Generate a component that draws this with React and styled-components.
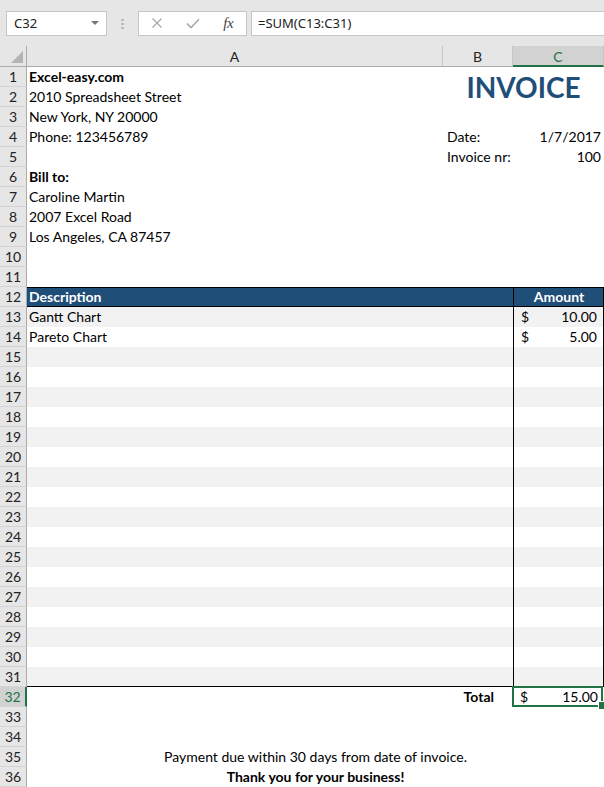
import React from "react";
import styled, { createGlobalStyle, css } from "styled-components";

const GREEN = "#217346";
const NAVY = "#1f4e78";
const CELL_FONT = `Lato, "Open Sans", "Liberation Sans", sans-serif`;
const UI_FONT = `"Noto Sans", "Open Sans", "DejaVu Sans", sans-serif`;

const GlobalStyle = createGlobalStyle`
  html, body {
    margin: 0;
    padding: 0;
    background: #fff;
  }
  body {
    width: 604px;
    height: 787px;
    overflow: hidden;
  }
  * {
    box-sizing: border-box;
  }
`;

/* ---------- formula bar ---------- */

const FormulaBar = styled.div`
  height: 46px;
  display: flex;
  align-items: center;
  padding-left: 6px;
  background: #e6e6e6;
  font-family: ${UI_FONT};
  font-size: 13px;
  color: #222;
`;

const NameBox = styled.div`
  width: 101px;
  height: 25px;
  flex: none;
  display: flex;
  align-items: center;
  justify-content: space-between;
  padding: 0 7px 0 7px;
  background: #fff;
  border: 1px solid #c6c6c6;
`;

const Caret = styled.span`
  width: 0;
  height: 0;
  border-left: 4px solid transparent;
  border-right: 4px solid transparent;
  border-top: 4px solid #777;
`;

const Grip = styled.div`
  width: 3px;
  height: 11px;
  flex: none;
  margin: 0 14px;
  background: radial-gradient(circle, #b0b0b0 1px, transparent 1.3px) 0 0 / 3px 4px repeat-y;
`;

const ButtonBox = styled.div`
  width: 109px;
  height: 25px;
  flex: none;
  display: flex;
  background: #fff;
  border: 1px solid #c6c6c6;
`;

const BarButton = styled.span`
  width: 36px;
  display: flex;
  align-items: center;
  justify-content: center;
  color: #a8a8a8;
`;

const Fx = styled.span`
  font-family: "Liberation Serif", "DejaVu Serif", serif;
  font-style: italic;
  font-size: 15px;
  color: #444;
  letter-spacing: -0.5px;
`;

const FormulaInput = styled.div`
  flex: none;
  width: 360px;
  height: 25px;
  margin-left: 4px;
  display: flex;
  align-items: center;
  padding-left: 6px;
  background: #fff;
  border: 1px solid #c6c6c6;
`;

/* ---------- sheet grid ---------- */

const Sheet = styled.div`
  display: grid;
  grid-template-columns: 27px 416px 70px 91px;
  grid-template-rows: 21px repeat(36, 20px);
  font-family: ${CELL_FONT};
  font-size: 14px;
  color: #000;
`;

const Corner = styled.div`
  grid-row: 1;
  grid-column: 1;
  display: flex;
  align-items: flex-end;
  justify-content: flex-end;
  padding: 0 3px 3px 0;
  background: #e6e6e6;
  border-right: 1px solid #ababab;
  border-bottom: 1px solid #ababab;
`;

const CornerMark = styled.span`
  width: 0;
  height: 0;
  border-left: 12px solid transparent;
  border-bottom: 12px solid #b4b4b4;
`;

const ColHead = styled.div`
  grid-row: 1;
  display: flex;
  align-items: center;
  justify-content: center;
  background: ${(p) => (p.$active ? "#d2d2d2" : "#e6e6e6")};
  color: ${(p) => (p.$active ? GREEN : "#222")};
  border-right: 1px solid #c6c6c6;
  border-bottom: ${(p) => (p.$active ? `2px solid ${GREEN}` : "1px solid #ababab")};
  padding-top: 1px;
`;

const RowHead = styled.div`
  grid-row: ${(p) => p.$r + 1};
  grid-column: 1;
  display: flex;
  align-items: center;
  justify-content: center;
  background: ${(p) => (p.$active ? "#d2d2d2" : "#e6e6e6")};
  color: ${(p) => (p.$active ? GREEN : "#222")};
  border-right: ${(p) => (p.$active ? `2px solid ${GREEN}` : "1px solid #ababab")};
  border-bottom: 1px solid #d4d4d4;
`;

const Cell = styled.div`
  grid-row: ${(p) => p.$r + 1} / span ${(p) => p.$rows || 1};
  grid-column: ${(p) => p.$c} / span ${(p) => p.$span || 1};
  display: flex;
  align-items: center;
  padding: 0 3px;
  line-height: 20px;
  white-space: nowrap;
  font-weight: ${(p) => (p.$bold ? 700 : 400)};
`;

const InfoCell = styled(Cell)`
  padding-left: 2px;
`;

const InvoiceTitle = styled(Cell)`
  justify-content: center;
  font-size: 28px;
  font-weight: 700;
  color: ${NAVY};
`;

const LabelCell = styled(Cell)`
  padding-left: 4px;
`;

const ValueCell = styled(Cell)`
  justify-content: flex-end;
  padding-right: 3px;
`;

const tableEdge = css`
  border-bottom: ${(p) => (p.$last ? "1px solid #000" : "none")};
`;

const HeadDesc = styled(Cell)`
  background: ${NAVY};
  color: #fff;
  font-weight: 700;
  padding-left: 2px;
  border-top: 1px solid #000;
  border-bottom: 1px solid #000;
`;

const HeadAmount = styled(Cell)`
  justify-content: center;
  background: ${NAVY};
  color: #fff;
  font-weight: 700;
  border: 1px solid #000;
  padding-left: 4px;
`;

const DescCell = styled(Cell)`
  background: ${(p) => (p.$shade ? "#f2f2f2" : "#fff")};
  padding-left: 2px;
  ${tableEdge}
`;

const AmountCell = styled(Cell)`
  justify-content: space-between;
  padding: 0 6px 0 7px;
  background: ${(p) => (p.$shade ? "#f2f2f2" : "#fff")};
  border-left: 1px solid #000;
  border-right: 1px solid #000;
  ${tableEdge}
`;

const TotalLabel = styled(Cell)`
  justify-content: flex-end;
  padding-right: 19px;
  font-weight: 700;
`;

const TotalAmount = styled(Cell)`
  position: relative;
  justify-content: space-between;
  padding: 0 6px 0 7px;

  &::before {
    content: "";
    position: absolute;
    top: -1px;
    left: -1px;
    right: 1px;
    bottom: 0;
    border: 2px solid ${GREEN};
  }

  &::after {
    content: "";
    position: absolute;
    right: -3px;
    bottom: -3px;
    width: 7px;
    height: 7px;
    background: ${GREEN};
    border: 1px solid #fff;
  }
`;

const NoteCell = styled(Cell)`
  justify-content: center;
`;

const CrossIcon = () => (
  <svg width="12" height="12" viewBox="0 0 12 12" fill="none" stroke="currentColor" strokeWidth="1.3">
    <path d="M1.5 1.5 L10.5 10.5 M10.5 1.5 L1.5 10.5" />
  </svg>
);

const CheckIcon = () => (
  <svg width="14" height="11" viewBox="0 0 14 11" fill="none" stroke="currentColor" strokeWidth="1.6">
    <path d="M1 5.5 L5 9.5 L13 1.2" />
  </svg>
);

const items = [
  { d: "Gantt Chart", v: "10.00" },
  { d: "Pareto Chart", v: "5.00" },
];

export default function App() {
  const rowNums = Array.from({ length: 36 }, (_, i) => i + 1);
  const tableRows = Array.from({ length: 19 }, (_, i) => i + 13);

  return (
    <>
      <GlobalStyle />
      <FormulaBar>
        <NameBox>
          C32
          <Caret />
        </NameBox>
        <Grip />
        <ButtonBox>
          <BarButton>
            <CrossIcon />
          </BarButton>
          <BarButton>
            <CheckIcon />
          </BarButton>
          <BarButton>
            <Fx>fx</Fx>
          </BarButton>
        </ButtonBox>
        <FormulaInput>=SUM(C13:C31)</FormulaInput>
      </FormulaBar>

      <Sheet>
        <Corner>
          <CornerMark />
        </Corner>
        <ColHead>A</ColHead>
        <ColHead>B</ColHead>
        <ColHead $active>C</ColHead>

        {rowNums.map((n) => (
          <RowHead key={n} $r={n} $active={n === 32}>
            {n}
          </RowHead>
        ))}

        <InfoCell $r={1} $c={2} $bold>Excel-easy.com</InfoCell>
        <InfoCell $r={2} $c={2}>2010 Spreadsheet Street</InfoCell>
        <InfoCell $r={3} $c={2}>New York, NY 20000</InfoCell>
        <InfoCell $r={4} $c={2}>Phone: 123456789</InfoCell>
        <InvoiceTitle $r={1} $rows={2} $c={3} $span={2}>INVOICE</InvoiceTitle>

        <LabelCell $r={4} $c={3}>Date:</LabelCell>
        <ValueCell $r={4} $c={4}>1/7/2017</ValueCell>
        <LabelCell $r={5} $c={3}>Invoice nr:</LabelCell>
        <ValueCell $r={5} $c={4}>100</ValueCell>

        <InfoCell $r={6} $c={2} $bold>Bill to:</InfoCell>
        <InfoCell $r={7} $c={2}>Caroline Martin</InfoCell>
        <InfoCell $r={8} $c={2}>2007 Excel Road</InfoCell>
        <InfoCell $r={9} $c={2}>Los Angeles, CA 87457</InfoCell>

        <HeadDesc $r={12} $c={2} $span={2}>Description</HeadDesc>
        <HeadAmount $r={12} $c={4}>Amount</HeadAmount>

        {tableRows.map((r) => {
          const item = items[r - 13];
          const shade = r % 2 === 1;
          const last = r === 31;
          return (
            <React.Fragment key={r}>
              <DescCell $r={r} $c={2} $span={2} $shade={shade} $last={last}>
                {item ? item.d : ""}
              </DescCell>
              <AmountCell $r={r} $c={4} $shade={shade} $last={last}>
                {item && (
                  <>
                    <span>$</span>
                    <span>{item.v}</span>
                  </>
                )}
              </AmountCell>
            </React.Fragment>
          );
        })}

        <TotalLabel $r={32} $c={3}>Total</TotalLabel>
        <TotalAmount $r={32} $c={4}>
          <span>$</span>
          <span>15.00</span>
        </TotalAmount>

        <NoteCell $r={35} $c={2} $span={3}>
          Payment due within 30 days from date of invoice.
        </NoteCell>
        <NoteCell $r={36} $c={2} $span={3} $bold>
          Thank you for your business!
        </NoteCell>
      </Sheet>
    </>
  );
}
